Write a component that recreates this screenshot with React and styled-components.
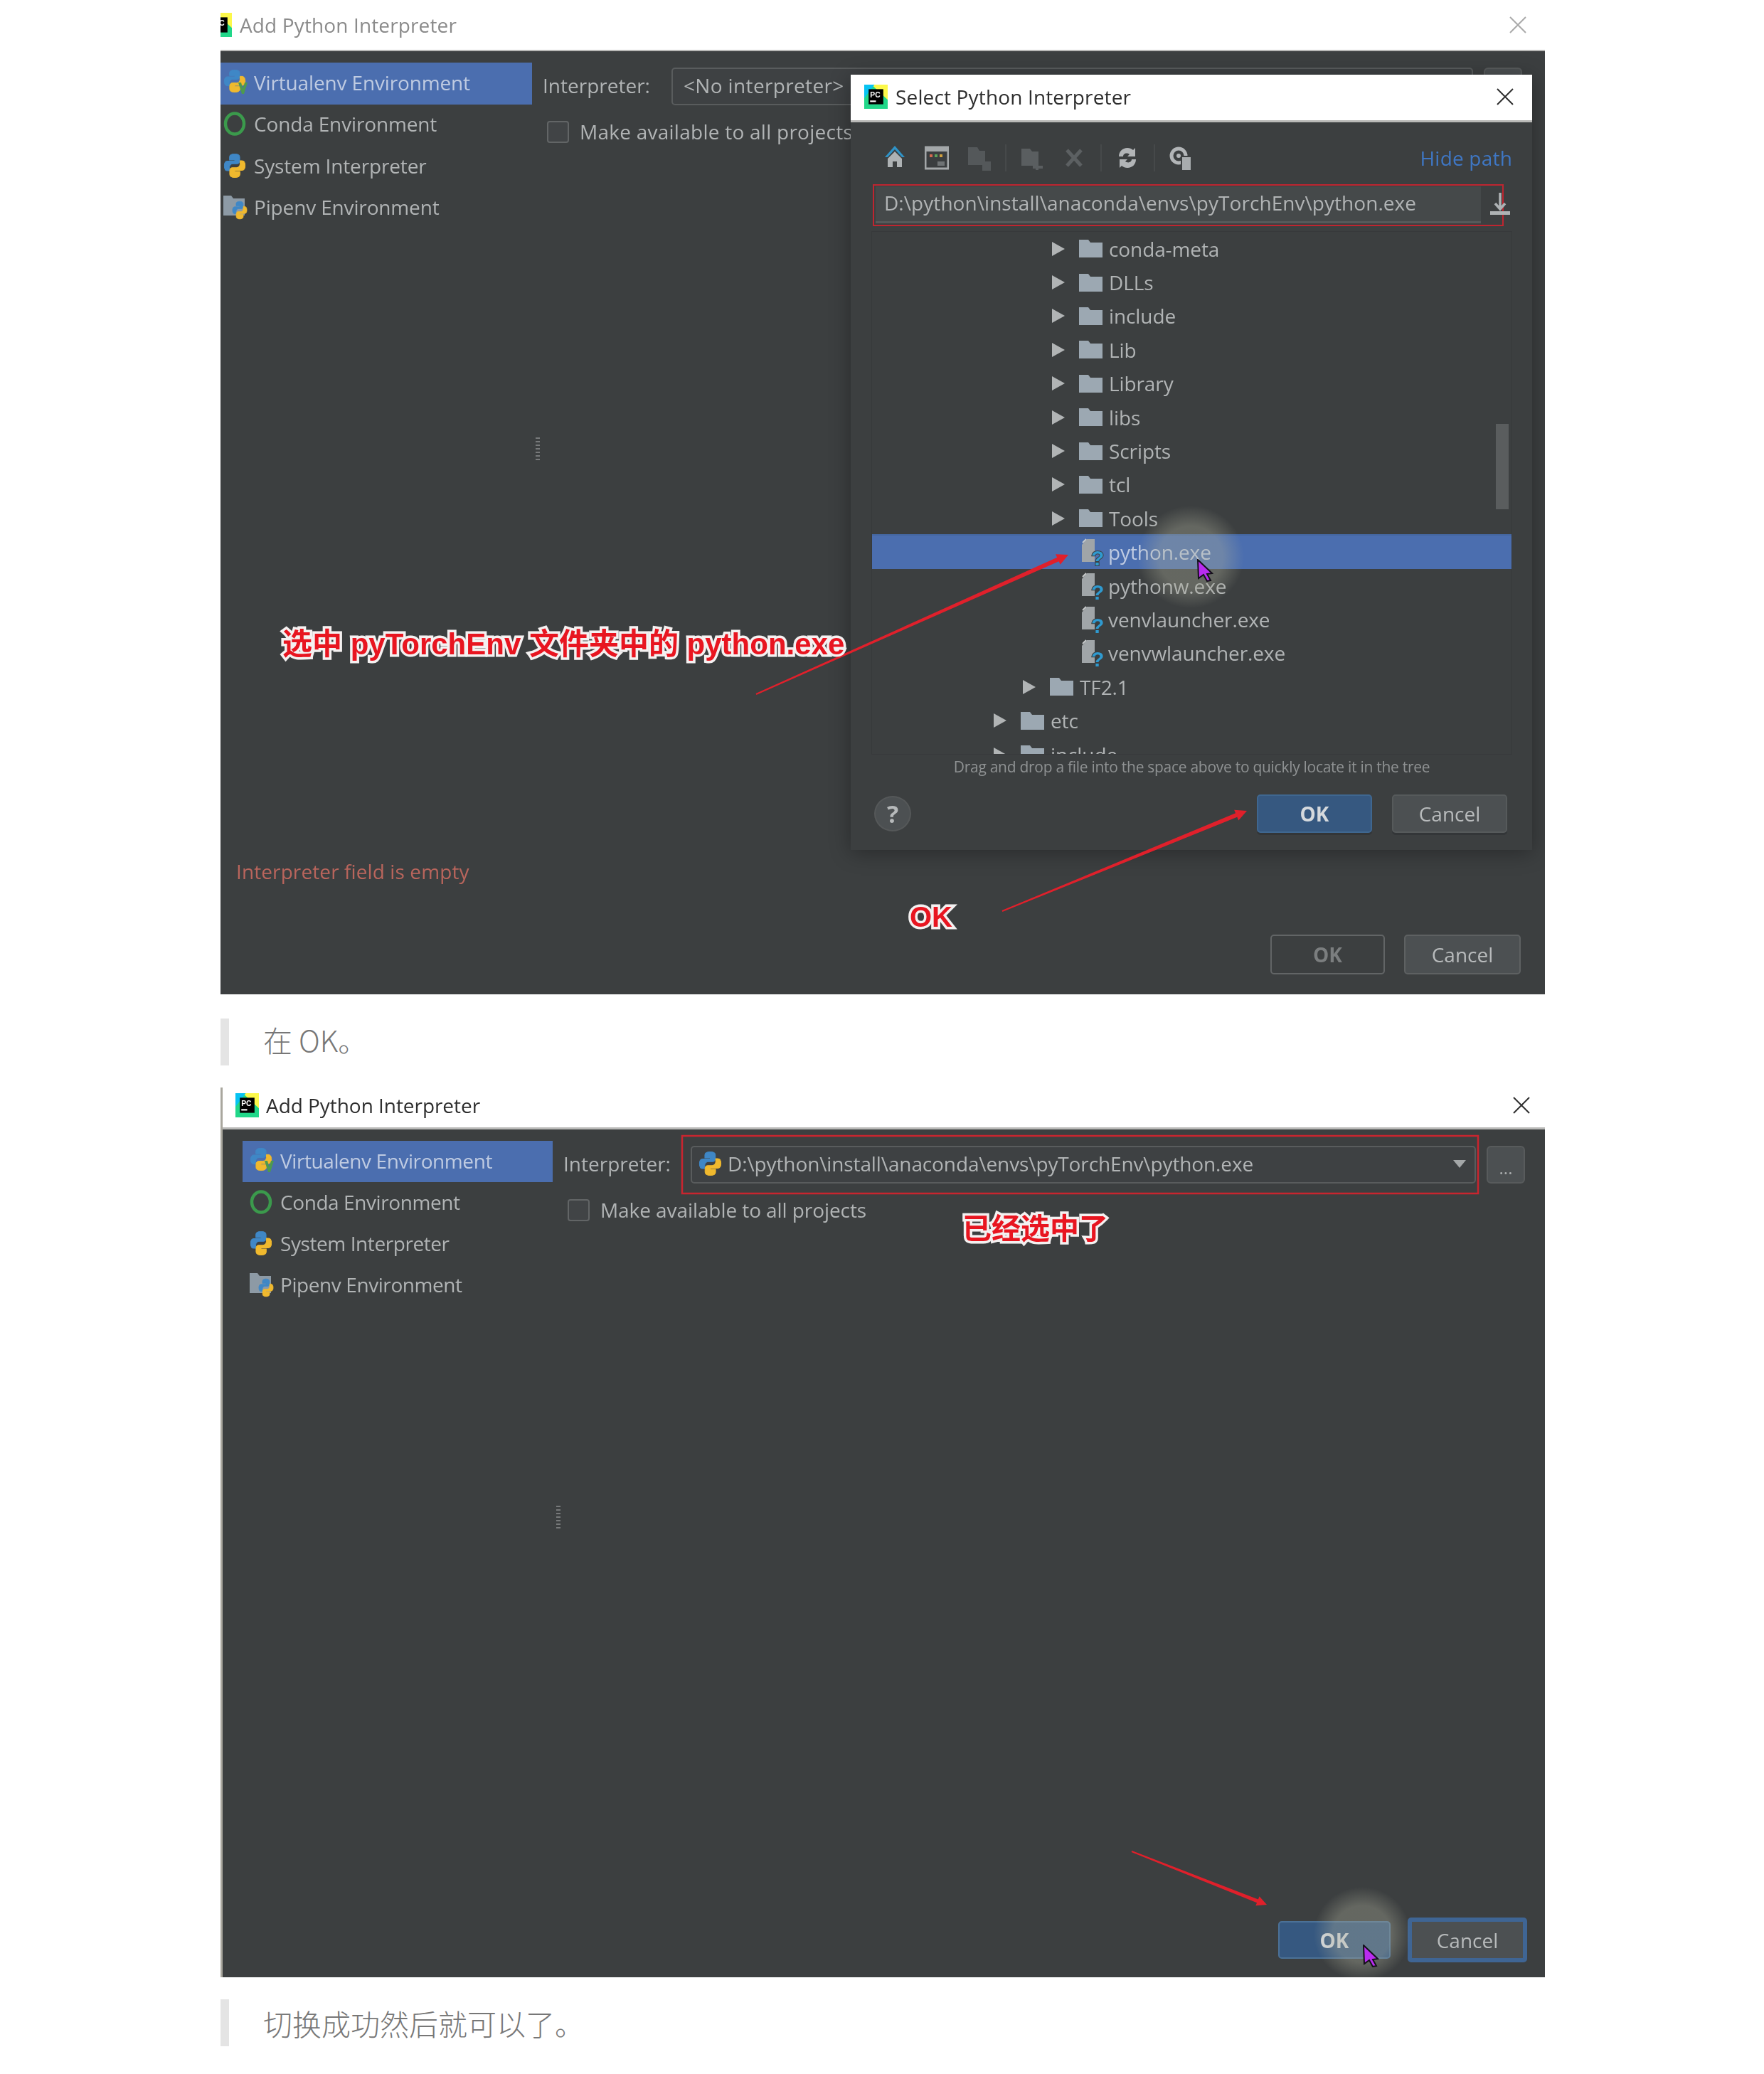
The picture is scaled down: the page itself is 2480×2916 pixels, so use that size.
import React from "react";
import styled, { createGlobalStyle } from "styled-components";

const Global = createGlobalStyle`
  html, body { margin: 0; background: #fff; }
  body { font-family: "Open Sans", "Noto Sans CJK SC", sans-serif; }
  * { box-sizing: border-box; }
`;

const Page = styled.div`
  width: 2480px;
  height: 2916px;
  padding-left: 310px;
  background: #fff;
`;

const Shot = styled.section`
  position: relative;
  width: 1862px;
  height: ${(p) => p.$height}px;
  margin-top: ${(p) => p.$top}px;
  display: flex;
  flex-direction: column;
  overflow: hidden;
  background: #3c3f40;
  border-left: ${(p) => p.$edge}px solid #a9a79e;
  filter: blur(0.7px);
`;

const TitleBar = styled.header`
  flex: none;
  height: ${(p) => p.$height}px;
  display: flex;
  align-items: center;
  gap: ${(p) => p.$gap}px;
  padding: 0 ${(p) => p.$right}px ${(p) => p.$lift || 0}px ${(p) => p.$left}px;
  background: #fff;
  border-bottom: ${(p) => p.$line}px solid #b9b9b7;
  color: ${(p) => p.$color};
  font-size: 28px;
  letter-spacing: ${(p) => p.$track}px;
`;

const TitleText = styled.span`
  flex: 1;
`;

const CloseMark = styled.svg`
  flex: none;
  width: 24px;
  height: 24px;
  fill: none;
  stroke: ${(p) => p.$color};
  stroke-width: 2;
`;

const Main = styled.div`
  flex: 1;
  min-height: 0;
  display: flex;
`;

const Sidebar = styled.ul`
  flex: none;
  width: ${(p) => p.$width}px;
  margin: 0;
  padding: 16px 0 0 ${(p) => p.$left}px;
  list-style: none;
`;

const SideRow = styled.li`
  height: ${(p) => p.$rowH}px;
  display: flex;
  align-items: center;
  gap: 9px;
  padding: 0 0 3px ${(p) => p.$pad}px;
  background: ${(p) => (p.$active ? "#4b6eaf" : "transparent")};
  color: ${(p) => (p.$active ? "#bfcbe2" : "#b1b4b5")};
  font-size: 28px;
  letter-spacing: ${(p) => p.$track}px;
  white-space: nowrap;
`;

const Splitter = styled.div`
  flex: none;
  width: ${(p) => p.$width}px;
  display: flex;
  align-items: center;
  padding-left: 5px;
  &::before {
    content: "";
    flex: none;
    width: 6px;
    height: 34px;
    margin-bottom: 16px;
    background: repeating-linear-gradient(#77797a 0 2px, transparent 2px 5px);
  }
`;

const Content = styled.div`
  flex: 1;
  min-width: 0;
  padding: 23px ${(p) => p.$right}px 0 0;
`;

const FieldRow = styled.div`
  display: flex;
  align-items: center;
  gap: 15px;
`;

const Label = styled.span`
  flex: none;
  width: ${(p) => p.$w}px;
  margin: 0 15px 3px 0;
  color: #b1b4b5;
  font-size: 28px;
  white-space: nowrap;
`;

const Combo = styled.div`
  flex: 1;
  height: 53px;
  display: flex;
  align-items: center;
  gap: 8px;
  padding: 0 12px 3px 9px;
  background: #3e4143;
  border: 2px solid #595c5d;
  border-radius: 5px;
  color: #b1b4b5;
  font-size: 28px;
  white-space: nowrap;
`;

const ComboText = styled.span`
  flex: 1;
  margin-left: ${(p) => p.$inset || 0}px;
  letter-spacing: ${(p) => p.$track}px;
`;

const Caret = styled.span`
  width: 0;
  height: 0;
  border-left: 9px solid transparent;
  border-right: 9px solid transparent;
  border-top: 11px solid #a4a7a8;
`;

const DotsButton = styled.div`
  flex: none;
  width: 54px;
  height: 53px;
  display: flex;
  align-items: flex-end;
  justify-content: center;
  padding-bottom: 8px;
  background: #4c5052;
  border: 2px solid #585b5c;
  border-radius: 6px;
  color: #a8abac;
  font-size: 24px;
  line-height: 1;
`;

const CheckRow = styled.label`
  display: flex;
  align-items: flex-start;
  gap: 15px;
  margin: 22px 0 0 6px;
  color: #b1b4b5;
  font-size: 28px;
  letter-spacing: ${(p) => p.$track}px;
  white-space: nowrap;
`;

const CheckText = styled.span`
  line-height: 31px;
`;

const CheckBox = styled.span`
  flex: none;
  width: 31px;
  height: 31px;
  background: #414446;
  border: 2px solid #626566;
  border-radius: 4px;
`;

const Footer = styled.footer`
  flex: none;
  padding: 0 ${(p) => p.$right}px ${(p) => p.$bottom}px 22px;
`;

const ErrorText = styled.div`
  height: 40px;
  margin-bottom: 67px;
  padding-bottom: 3px;
  color: #b9655c;
  font-size: 28px;
  line-height: 36px;
  letter-spacing: 0.1px;
`;

const ButtonRow = styled.div`
  display: flex;
  justify-content: ${(p) => (p.$spread ? "space-between" : "flex-end")};
  align-items: center;
  gap: ${(p) => p.$gap}px;
`;

const ButtonPair = styled.div`
  display: flex;
  align-items: center;
  gap: ${(p) => p.$gap}px;
`;

const Btn = styled.div`
  width: ${(p) => p.$w}px;
  height: ${(p) => p.$h}px;
  display: flex;
  align-items: center;
  justify-content: center;
  background: ${(p) => p.$bg};
  border: ${(p) => p.$bw || 2}px solid ${(p) => p.$line};
  border-radius: 5px;
  box-shadow: ${(p) => (p.$raised ? "0 3px 0 #333638" : "none")};
  color: ${(p) => p.$color};
  font-size: 28px;
  font-weight: ${(p) => (p.$bold ? 700 : 400)};
`;

const Dialog = styled.div`
  position: absolute;
  left: 886px;
  top: 105px;
  width: 958px;
  height: 1090px;
  display: flex;
  flex-direction: column;
  background: #3c3f40;
  box-shadow: 0 4px 28px rgba(0, 0, 0, 0.32);
`;

const DialogBody = styled.div`
  flex: 1;
  display: flex;
  flex-direction: column;
  padding: 0 28px 0 29px;
`;

const Toolbar = styled.div`
  flex: none;
  height: 87px;
  padding: 13px 0 0 16px;
  display: flex;
  align-items: center;
  gap: 25px;
`;

const ToolSep = styled.span`
  width: 2px;
  height: 38px;
  margin: 0 -5.5px;
  background: #46494a;
`;

const HideLink = styled.span`
  margin-left: auto;
  color: #3f77c4;
  font-size: 28px;
  letter-spacing: 0.2px;
`;

const PathFrame = styled.div`
  position: relative;
  flex: none;
  width: 887px;
  height: 59px;
  margin-left: 2px;
  padding: 1px 30px 2px 2px;
  border: 2px solid #bf2530;
`;

const PathField = styled.div`
  height: 100%;
  display: flex;
  align-items: center;
  padding: 0 0 3px 12px;
  background: #45494a;
  border-bottom: 3px solid #565a5b;
  color: #b1b4b5;
  font-size: 28px;
  letter-spacing: 0.05px;
  white-space: nowrap;
`;

const PathAction = styled.svg`
  position: absolute;
  right: -11px;
  top: 10px;
  width: 28px;
  height: 34px;
`;

const Tree = styled.div`
  position: relative;
  flex: none;
  height: 736px;
  margin-top: 7px;
  overflow: hidden;
  background: #3c3f40;
  border: 1px solid #37393b;
`;

const TreeRow = styled.div`
  height: 47.4px;
  display: flex;
  align-items: center;
  gap: 9px;
  padding-left: ${(p) => p.$indent}px;
  background: ${(p) => (p.$active ? "#4b6eaf" : "transparent")};
  box-shadow: ${(p) => (p.$active ? "0 -2px 0 #44669f" : "none")};
  color: ${(p) => (p.$active ? "#bfcbe2" : "#b1b4b5")};
  font-size: 28px;
  letter-spacing: -0.1px;
  white-space: nowrap;
`;

const Twisty = styled.span`
  flex: none;
  width: 0;
  height: 0;
  margin-right: 11px;
  border-top: 10px solid transparent;
  border-bottom: 10px solid transparent;
  border-left: 18px solid #b1b4b5;
`;

const TreeThumb = styled.div`
  position: absolute;
  right: 4px;
  top: 270px;
  width: 18px;
  height: 120px;
  background: #5a5d5e;
`;

const Hint = styled.div`
  flex: none;
  height: 34px;
  text-align: center;
  color: #8f9293;
  font-size: 21px;
  line-height: 34px;
  letter-spacing: -0.28px;
`;

const DialogFoot = styled.div`
  flex: none;
  margin-top: 22px;
  padding: 0 7px 0 4px;
`;

const Help = styled.div`
  width: 52px;
  height: 50px;
  display: flex;
  align-items: center;
  justify-content: center;
  background: #4c5052;
  border: 2px solid #555859;
  border-radius: 50%;
  color: #b6b9ba;
  font-size: 34px;
  font-weight: 700;
`;

const Note = styled.div`
  position: absolute;
  left: ${(p) => p.$x}px;
  top: ${(p) => p.$y}px;
  color: #e81520;
  font-family: "Liberation Sans", "Noto Sans CJK SC", sans-serif;
  font-size: ${(p) => p.$size}px;
  font-weight: 700;
  line-height: 50px;
  white-space: pre;
  -webkit-text-stroke: 7px #f4f1f1;
  paint-order: stroke fill;
`;

const Glow = styled.div`
  position: absolute;
  left: ${(p) => p.$x - p.$rx}px;
  top: ${(p) => p.$y - p.$ry}px;
  width: ${(p) => p.$rx * 2}px;
  height: ${(p) => p.$ry * 2}px;
  border-radius: 50%;
  background: radial-gradient(closest-side, rgba(172, 174, 155, 0.36) 60%, rgba(172, 174, 155, 0) 100%);
`;

const Overlay = styled.svg`
  position: absolute;
  left: 0;
  top: 0;
  width: 100%;
  height: 100%;
  pointer-events: none;
`;

const Pointer = styled.svg`
  position: absolute;
  left: ${(p) => p.$x}px;
  top: ${(p) => p.$y}px;
  width: 24px;
  height: 32px;
`;

const Quote = styled.blockquote`
  height: 66px;
  margin: ${(p) => p.$top}px 0 0;
  padding: 0 0 ${(p) => p.$lift || 0}px 48px;
  display: flex;
  align-items: center;
  border-left: 12px solid #e4e4e4;
  color: #777;
  font-family: "Noto Sans CJK SC", sans-serif;
  font-size: 41px;
  font-weight: 300;
`;

function PyCharmIcon({ w = 33, h = 34, style }) {
  return (
    <svg width={w} height={h} viewBox="0 0 32 32" preserveAspectRatio="none" style={{ flex: "none", ...style }}>
      <rect width="32" height="32" fill="#21d789" />
      <polygon points="10,0 32,0 32,20" fill="#fcf84a" />
      <polygon points="0,0 14,0 0,18" fill="#07c3f2" />
      <rect x="6" y="6" width="20" height="20" fill="#000" />
      <text x="8" y="17" fill="#fff" fontSize="10" fontWeight="700" fontFamily="Liberation Sans, sans-serif">PC</text>
      <rect x="8" y="21" width="8" height="2" fill="#fff" />
    </svg>
  );
}

function PythonShape() {
  return (
    <>
      <path d="M12 1c-3.6 0-5.5 1-5.500 3v2.600H12v1.100H4.400C2.300 7.700 1 9.400 1 12.100s1.200 4.600 3.400 4.600h2v-2.900c0-2 1.600-3.600 3.600-3.600h4.400c1.600 0 2.900-1.300 2.900-2.900V4C17.300 2 15.300 1 12 1Z" fill="#3f87c6" stroke="#3f87c6" strokeWidth="0.7" />
      <path d="M12 23c3.600 0 5.500-1 5.500-3v-2.600H12v-1.100h7.600c2.100 0 3.400-1.700 3.400-4.400s-1.200-4.600-3.400-4.600h-2v2.900c0 2-1.600 3.600-3.600 3.600h-4.400c-1.600 0-2.900 1.300-2.900 2.900V20C6.700 22 8.700 23 12 23Z" fill="#f0b92e" stroke="#f0b92e" strokeWidth="0.7" />
    </>
  );
}

function PythonIcon({ w = 33, h = 36 }) {
  return (
    <svg width={w} height={h} viewBox="0 0 24 24" preserveAspectRatio="none" style={{ flex: "none" }}>
      <PythonShape />
    </svg>
  );
}

function EnvIcon({ kind }) {
  if (kind === "conda") {
    return (
      <svg width="34" height="36" viewBox="0 0 34 36" style={{ flex: "none" }}>
        <ellipse cx="16" cy="18" rx="13" ry="14.500" fill="none" stroke="#3b9a4c" strokeWidth="4.500" />
      </svg>
    );
  }
  if (kind === "python") {
    return (
      <svg width="34" height="36" viewBox="0 0 34 36" style={{ flex: "none" }}>
        <svg x="0" y="0" width="32" height="36" viewBox="0 0 24 24" preserveAspectRatio="none">
          <PythonShape />
        </svg>
      </svg>
    );
  }
  if (kind === "venv") {
    return (
      <svg width="34" height="38" viewBox="0 0 34 38" style={{ flex: "none" }}>
        <svg x="0" y="0" width="32" height="34" viewBox="0 0 24 24" preserveAspectRatio="none">
          <PythonShape />
        </svg>
        <path d="M21 19l5 16h3l5-16h-4l-2.500 9-2.500-9Z" fill="#4d9a4f" />
      </svg>
    );
  }
  return (
    <svg width="34" height="36" viewBox="0 0 34 36" style={{ flex: "none" }}>
      <path d="M0 2h11l3 4h16v24H0Z" fill="#8d9aa5" />
      <svg x="12" y="9" width="22" height="27" viewBox="0 0 24 24" preserveAspectRatio="none">
        <PythonShape />
      </svg>
    </svg>
  );
}

function FolderIcon() {
  return (
    <svg width="33" height="25" viewBox="0 0 33 25" style={{ flex: "none" }}>
      <path d="M0 0h13l3 4h17v21H0Z" fill="#9ca8b2" />
    </svg>
  );
}

function FileIcon() {
  return (
    <svg width="33" height="44" viewBox="0 0 33 44" style={{ flex: "none", overflow: "visible" }}>
      <path d="M12 4h11v32H5V12Z" fill="#a0a5a8" />
      <path d="M6 9l5-5" stroke="#c9cccd" strokeWidth="2" />
      <text x="18" y="41" fill="#2f9ad0" stroke="#3c3f40" strokeWidth="2" paintOrder="stroke" fontSize="30" fontWeight="700" fontFamily="Liberation Sans, sans-serif">?</text>
    </svg>
  );
}

function ToolIcon({ kind }) {
  return (
    <svg width="34" height="38" viewBox="0 0 34 38" style={{ flex: "none" }}>
      {kind === "home" && (
        <>
          <path d="M17 2 3 18h4l10-11 10 11h4Z" fill="#2f93c7" />
          <path d="M7 20 17 10l10 10v12h-7v-8h-6v8H7Z" fill="#aeb2b4" />
        </>
      )}
      {kind === "term" && (
        <>
          <rect x="1" y="4" width="32" height="30" fill="#3a3d3f" stroke="#a3a7a9" strokeWidth="3" />
          <rect x="1" y="4" width="32" height="6" fill="#a3a7a9" />
          <rect x="7" y="14" width="4" height="4" fill="#d2694f" />
          <rect x="14" y="14" width="4" height="4" fill="#5aa35a" />
          <rect x="21" y="14" width="4" height="4" fill="#d0a03f" />
          <rect x="18" y="24" width="10" height="6" fill="#6f7375" />
        </>
      )}
      {kind === "ghost" && (
        <>
          <path d="M2 4h13l3 5h8v20H2Z" fill="#54585a" />
          <rect x="22" y="24" width="12" height="13" fill="#54585a" />
        </>
      )}
      {kind === "newdir" && (
        <>
          <path d="M2 6h12l3 4h9v20H2Z" fill="#5a5e60" />
          <path d="M24 24v12M18 32h14" stroke="#5a5e60" strokeWidth="4" />
        </>
      )}
      {kind === "delete" && <path d="M7 8l20 22M27 8 7 30" stroke="#5c6062" strokeWidth="5" />}
      {kind === "refresh" && (
        <>
          <path d="M5 17c0-7 5-12 12-12 3 0 6 1 8 3l3-3v12H17l3-3c-4-3-9-1-9 3Z" fill="#b2b5b7" />
          <path d="M29 21c0 7-5 12-12 12-3 0-6-1-8-3l-3 3V21h11l-3 3c4 3 9 1 9-3Z" fill="#b2b5b7" />
        </>
      )}
      {kind === "link" && (
        <>
          <circle cx="14" cy="16" r="10" fill="none" stroke="#b2b5b7" strokeWidth="5" />
          <circle cx="14" cy="16" r="3" fill="#b2b5b7" />
          <rect x="17" y="16" width="15" height="21" fill="#3c3f40" />
          <rect x="19" y="18" width="12" height="18" fill="#a8acae" />
        </>
      )}
    </svg>
  );
}

function Cross({ color }) {
  return (
    <CloseMark $color={color} viewBox="0 0 24 24">
      <path d="M1 1l22 22M23 1 1 23" />
    </CloseMark>
  );
}

function Arrow({ x1, y1, x2, y2, w = 6, head = 16 }) {
  const len = Math.hypot(x2 - x1, y2 - y1);
  const ux = (x2 - x1) / len;
  const uy = (y2 - y1) / len;
  const nx = -uy;
  const ny = ux;
  const bx = x2 - ux * head;
  const by = y2 - uy * head;
  const pts = [
    [x1 + nx, y1 + ny],
    [bx + nx * (w / 2), by + ny * (w / 2)],
    [bx + nx * (head / 2), by + ny * (head / 2)],
    [x2, y2],
    [bx - nx * (head / 2), by - ny * (head / 2)],
    [bx - nx * (w / 2), by - ny * (w / 2)],
    [x1 - nx, y1 - ny],
  ];
  return <polygon points={pts.map((p) => p.join(",")).join(" ")} fill="#e0202b" />;
}

function Cursor({ x, y }) {
  return (
    <Pointer $x={x} $y={y} viewBox="0 0 24 32">
      <path d="M2 1 22 20l-7 1 5 9-5 1-5-9-7 5Z" fill="#b92cf0" stroke="#14101a" strokeWidth="2" />
    </Pointer>
  );
}

const envs = [
  { name: "Virtualenv Environment", kind: "venv", active: true },
  { name: "Conda Environment", kind: "conda" },
  { name: "System Interpreter", kind: "python" },
  { name: "Pipenv Environment", kind: "pipenv" },
];

const files = [
  { name: "conda-meta", depth: 2 },
  { name: "DLLs", depth: 2 },
  { name: "include", depth: 2 },
  { name: "Lib", depth: 2 },
  { name: "Library", depth: 2 },
  { name: "libs", depth: 2 },
  { name: "Scripts", depth: 2 },
  { name: "tcl", depth: 2 },
  { name: "Tools", depth: 2 },
  { name: "python.exe", file: true, active: true },
  { name: "pythonw.exe", file: true },
  { name: "venvlauncher.exe", file: true },
  { name: "venvwlauncher.exe", file: true },
  { name: "TF2.1", depth: 1 },
  { name: "etc", depth: 0 },
  { name: "include", depth: 0 },
];

function EnvList({ width, left, pad, rowH, track }) {
  return (
    <Sidebar $width={width} $left={left}>
      {envs.map((e) => (
        <SideRow key={e.name} $active={e.active} $pad={pad} $rowH={rowH} $track={track}>
          <EnvIcon kind={e.kind} />
          {e.name}
        </SideRow>
      ))}
    </Sidebar>
  );
}

function SelectDialog() {
  return (
    <Dialog>
      <TitleBar $height={67} $line={3} $left={19} $right={26} $gap={11} $color="#2e2e2e" $track={0.15} $lift={2}>
        <PyCharmIcon />
        <TitleText>Select Python Interpreter</TitleText>
        <Cross color="#2e2e2e" />
      </TitleBar>
      <DialogBody>
        <Toolbar>
          <ToolIcon kind="home" />
          <ToolIcon kind="term" />
          <ToolIcon kind="ghost" />
          <ToolSep />
          <ToolIcon kind="newdir" />
          <ToolIcon kind="delete" />
          <ToolSep />
          <ToolIcon kind="refresh" />
          <ToolSep />
          <ToolIcon kind="link" />
          <HideLink>Hide path</HideLink>
        </Toolbar>
        <PathFrame>
          <PathField>D:\python\install\anaconda\envs\pyTorchEnv\python.exe</PathField>
          <PathAction viewBox="0 0 28 34">
            <path d="M14 0v22M7 15l7 8 7-8" fill="none" stroke="#aeb2b4" strokeWidth="3.500" />
            <rect y="26" width="28" height="5" fill="#aeb2b4" />
          </PathAction>
        </PathFrame>
        <Tree>
          {files.map((f, i) => (
            <TreeRow key={i} $active={f.active} $indent={f.file ? 290 : 171 + 41 * f.depth}>
              {f.file ? <FileIcon /> : <Twisty />}
              {!f.file && <FolderIcon />}
              <span>{f.name}</span>
            </TreeRow>
          ))}
          <TreeThumb />
          <Glow $x={448} $y={457} $rx={75} $ry={72} />
          <Cursor x={456} y={460} />
        </Tree>
        <Hint>Drag and drop a file into the space above to quickly locate it in the tree</Hint>
        <DialogFoot>
          <ButtonRow $spread>
            <Help>?</Help>
            <ButtonPair $gap={28}>
              <Btn $w={162} $h={54} $bg="#365880" $line="#3f6790" $color="#d5d9dd" $bold $raised>OK</Btn>
              <Btn $w={162} $h={54} $bg="#4c5052" $line="#565a5b" $color="#b8bbbc" $raised>Cancel</Btn>
            </ButtonPair>
          </ButtonRow>
        </DialogFoot>
      </DialogBody>
    </Dialog>
  );
}

export default function App() {
  return (
    <Page>
      <Global />
      <Shot $height={1398} $top={0} $edge={0}>
        <TitleBar $height={72} $line={2} $left={0} $right={26} $gap={11} $color="#8b8b8b" $track={0.13}>
          <PyCharmIcon style={{ marginLeft: -17 }} />
          <TitleText>Add Python Interpreter</TitleText>
          <Cross color="#a9a9a9" />
        </TitleBar>
        <Main>
          <EnvList width={438} left={0} pad={4} rowH={58.5} track={-0.15} />
          <Splitter $width={15} />
          <Content $right={32}>
            <FieldRow>
              <Label $w={151}>Interpreter:</Label>
              <Combo>
                <ComboText $inset={6} $track={0.35}>&lt;No interpreter&gt;</ComboText>
              </Combo>
              <DotsButton>...</DotsButton>
            </FieldRow>
            <CheckRow $track={0.25}>
              <CheckBox />
              <CheckText>Make available to all projects</CheckText>
            </CheckRow>
          </Content>
        </Main>
        <Footer $right={34} $bottom={28}>
          <ErrorText>Interpreter field is empty</ErrorText>
          <ButtonRow $gap={27}>
            <Btn $w={161} $h={56} $bg="#3c3f40" $line="#626566" $color="#7b7e7f" $bold>OK</Btn>
            <Btn $w={164} $h={56} $bg="#4c5052" $line="#5e6162" $color="#b8bbbc">Cancel</Btn>
          </ButtonRow>
        </Footer>
        <SelectDialog />
        <Overlay>
          <Arrow x1={753} y1={976} x2={1192} y2={780} />
          <Arrow x1={1099} y1={1281} x2={1443} y2={1140} />
        </Overlay>
        <Note $x={87} $y={881} $size={42}>选中 pyTorchEnv 文件夹中的 python.exe</Note>
        <Note $x={969} $y={1264} $size={40}>OK</Note>
      </Shot>

      <Quote $top={34} $lift={8}>在 OK。</Quote>

      <Shot $height={1251} $top={31} $edge={3}>
        <TitleBar $height={59} $line={3} $left={18} $right={21} $gap={10} $color="#2e2e2e" $track={-0.05} $lift={6}>
          <PyCharmIcon />
          <TitleText>Add Python Interpreter</TitleText>
          <Cross color="#2e2e2e" />
        </TitleBar>
        <Main>
          <EnvList width={464} left={28} pad={10} rowH={58} track={-0.42} />
          <Splitter $width={15} />
          <Content $right={28}>
            <FieldRow>
              <Label $w={149}>Interpreter:</Label>
              <Combo>
                <PythonIcon />
                <ComboText $track={-0.12}>D:\python\install\anaconda\envs\pyTorchEnv\python.exe</ComboText>
                <Caret />
              </Combo>
              <DotsButton>...</DotsButton>
            </FieldRow>
            <CheckRow $track={-0.08}>
              <CheckBox />
              <CheckText>Make available to all projects</CheckText>
            </CheckRow>
          </Content>
        </Main>
        <Footer $right={25} $bottom={21}>
          <ButtonRow $gap={24}>
            <Btn $w={158} $h={53} $bg="#365880" $line="#4b7197" $color="#d5d9dd" $bold>OK</Btn>
            <Btn $w={168} $h={63} $bw={6} $bg="#4c5052" $line="#3f6594" $color="#b8bbbc">Cancel</Btn>
          </ButtonRow>
        </Footer>
        <Overlay>
          <rect x={646} y={68} width={1119} height={81} fill="none" stroke="#c8252f" strokeWidth="2.500" />
          <Arrow x1={1278} y1={1074} x2={1468} y2={1149} w={5} head={14} />
        </Overlay>
        <Glow $x={1602} $y={1190} $rx={68} $ry={66} />
        <Note $x={1040} $y={174} $size={41}>已经选中了</Note>
        <Cursor x={1602} y={1205} />
      </Shot>

      <Quote $top={31}>切换成功然后就可以了。</Quote>
    </Page>
  );
}
